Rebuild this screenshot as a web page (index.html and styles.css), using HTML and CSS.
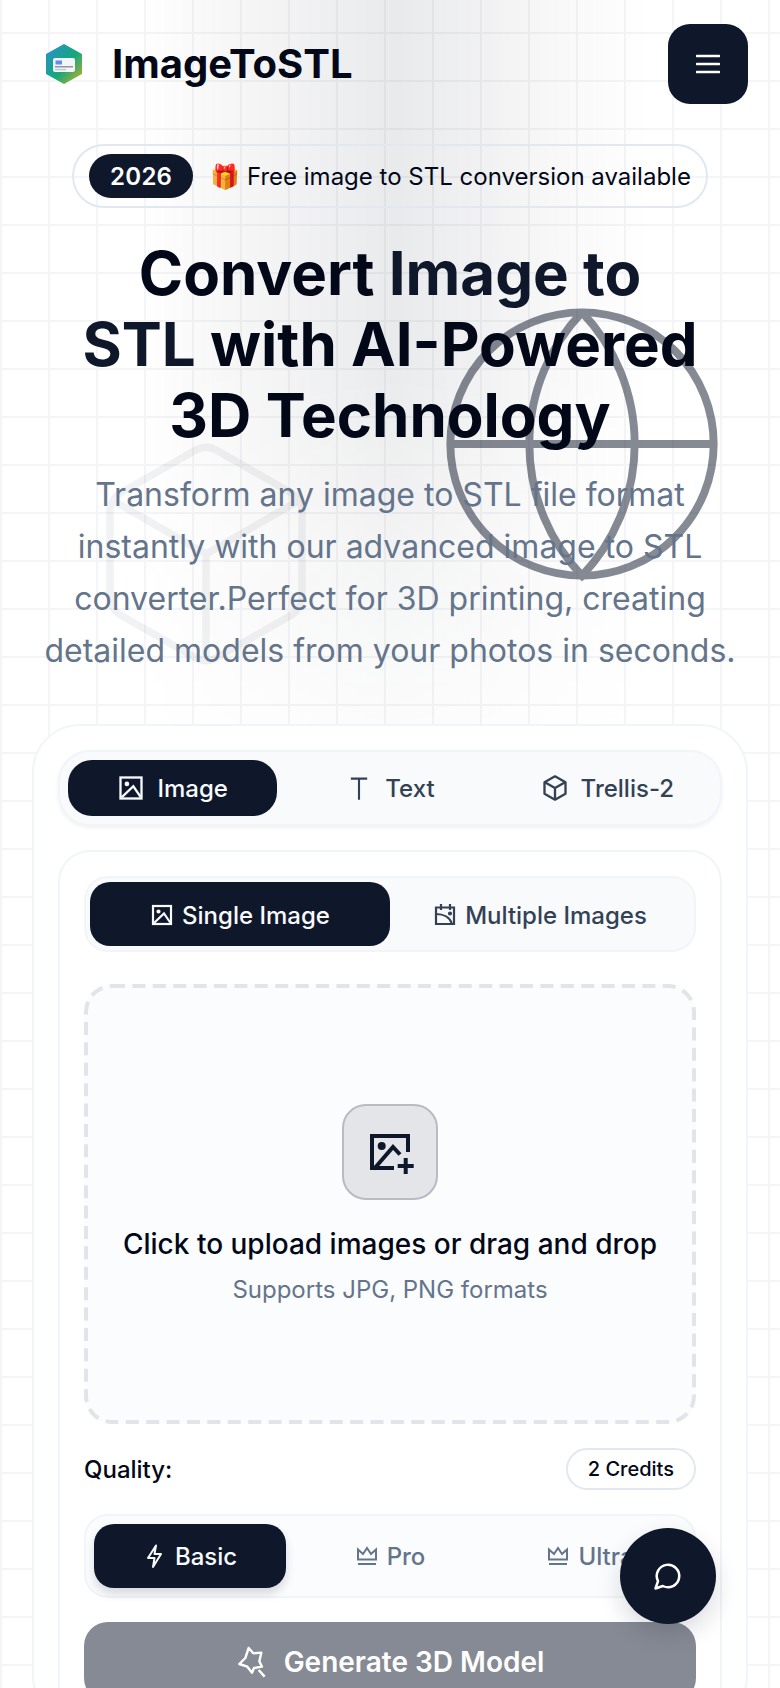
FILE: index.html
```html
<!DOCTYPE html>
<html lang="en">
<head>
<meta charset="utf-8">
<title>ImageToSTL</title>
<link rel="stylesheet" href="styles.css">
</head>
<body>
<div class="glow"></div>
<svg class="bg-cube" viewBox="0 0 24 24" fill="none" stroke="currentColor" stroke-width=".7"><path d="M21 8a2 2 0 0 0-1-1.73l-7-4a2 2 0 0 0-2 0l-7 4A2 2 0 0 0 3 8v8a2 2 0 0 0 1 1.73l7 4a2 2 0 0 0 2 0l7-4A2 2 0 0 0 21 16Z"/><path d="m3.3 7 8.7 5 8.7-5"/><path d="M12 22V12"/></svg>
<svg class="bg-globe" viewBox="0 0 24 24" fill="none" stroke="currentColor" stroke-width=".6"><circle cx="12" cy="12" r="10"/><path d="M12 2a14.5 14.5 0 0 0 0 20 14.5 14.5 0 0 0 0-20"/><path d="M2 12h20"/></svg>

<header class="header">
  <div class="brand">
    <svg class="logo" viewBox="0 0 64 64"><defs><linearGradient id="lg" x1="0" y1="0" x2="1" y2="1"><stop offset="0" stop-color="#2a8fd0"/><stop offset=".55" stop-color="#14a87c"/><stop offset="1" stop-color="#c2b026"/></linearGradient></defs><path d="M32 13 49 22.500V41.500L32 51 15 41.500V22.500Z" fill="url(#lg)" stroke="url(#lg)" stroke-width="2" stroke-linejoin="round"/><rect x="21" y="26" width="22" height="14" rx="2" fill="#f3f5f7"/><rect x="23.500" y="28.500" width="6.500" height="4" fill="#5b8ff0"/><rect x="23" y="34" width="18" height="1.500" fill="#8f98a3"/><rect x="23" y="36.800" width="11" height="1.500" fill="#c5cad0"/></svg>
    <span class="brand-name">ImageToSTL</span>
  </div>
  <button class="menu-btn" aria-label="Menu"><svg viewBox="0 0 24 24" fill="none" stroke="#fff" stroke-width="2.600" stroke-linecap="round"><path d="M1 4h22M1 12h22M1 20h22"/></svg></button>
</header>

<main class="hero">
  <div class="announce"><span class="year">2026</span><span class="announce-text"><span class="gift">🎁</span> Free image to STL conversion available</span></div>
  <h1 class="title"><span class="dark">Convert</span> <span class="navy">Image to</span><br><span class="navy">STL</span> <span class="dark">with AI-Powered</span><br><span class="dark">3D Technology</span></h1>
  <p class="lead">Transform any image to STL file format instantly with our advanced image to STL converter.Perfect for 3D printing, creating detailed models from your photos in seconds.</p>
</main>

<section class="card">
  <div class="mode-tabs">
    <button class="mode-tab active"><svg class="ico" viewBox="0 0 24 24" fill="none" stroke="currentColor" stroke-width="2"><rect x="3" y="3" width="18" height="18"/><circle cx="8.500" cy="8.500" r="1" fill="currentColor"/><path d="M4 20 14 10.500 20.500 20"/></svg>Image</button>
    <button class="mode-tab"><svg class="ico" viewBox="0 0 24 24" fill="none" stroke="currentColor" stroke-width="1.800"><path d="M5 4h14M12 4v18"/></svg>Text</button>
    <button class="mode-tab"><svg class="ico" viewBox="0 0 24 24" fill="none" stroke="currentColor" stroke-width="2" stroke-linejoin="round"><path d="M12 2 21 7v10l-9 5-9-5V7Z"/><path d="m3.300 7 8.700 5 8.700-5M12 22V12"/></svg>Trellis-2</button>
  </div>
  <div class="panel">
    <div class="sub-tabs">
      <button class="sub-tab active"><svg class="ico-sm" viewBox="0 0 24 24" fill="none" stroke="currentColor" stroke-width="2.200"><rect x="3" y="3" width="18" height="18"/><circle cx="8.500" cy="8.500" r="1" fill="currentColor"/><path d="M4 20 14 10.500 20.500 20"/></svg>Single Image</button>
      <button class="sub-tab"><svg class="ico-sm" viewBox="0 0 24 24" fill="none" stroke="currentColor" stroke-width="2.200"><path d="M8 1v6M17 1v6M3 4.500h18V21H3Z"/><path d="M3 11c7 0 14 3 16 10"/><circle cx="17" cy="10.500" r="1" fill="currentColor"/></svg>Multiple Images</button>
    </div>
    <div class="dropzone">
      <svg class="dash" viewBox="0 0 612 440" fill="none"><rect x="2" y="2" width="608" height="436" rx="26" stroke="#e2e4e9" stroke-width="4" stroke-dasharray="13 7.400"/></svg>
      <div class="upload-icon"><svg viewBox="0 0 48 48" fill="none" stroke="#0f172a" stroke-width="4"><path d="M28 40H6V8H42V24"/><circle cx="15.700" cy="18" r="4" fill="#0f172a" stroke="none"/><path d="M8 41 27 19l7 7.500"/><path d="M39.700 30v16M31.700 38h16"/></svg></div>
      <p class="drop-title">Click to upload images or drag and drop</p>
      <p class="drop-sub">Supports JPG, PNG formats</p>
    </div>
    <div class="quality-row"><span class="quality-label">Quality:</span><span class="credits">2 Credits</span></div>
    <div class="quality-tabs">
      <button class="q-tab active"><svg class="ico-sm" viewBox="0 0 24 24" fill="none" stroke="currentColor" stroke-width="2" stroke-linejoin="round"><path d="M13 1.500 5 14h6.500L10 23l8-13h-6.500Z"/></svg>Basic</button>
      <button class="q-tab"><svg class="ico-sm" viewBox="0 0 24 24" fill="none" stroke="currentColor" stroke-width="2"><path d="M3 5.500v10h18v-10l-5 4.500-4-6-4 6Z"/><path d="M3 20h18"/></svg>Pro</button>
      <button class="q-tab"><svg class="ico-sm" viewBox="0 0 24 24" fill="none" stroke="currentColor" stroke-width="2"><path d="M3 5.500v10h18v-10l-5 4.500-4-6-4 6Z"/><path d="M3 20h18"/></svg>Ultra</button>
    </div>
    <button class="generate"><svg class="ico-lg" viewBox="0 0 24 24" fill="none" stroke="currentColor" stroke-width="1.800" stroke-linejoin="round"><path d="M9.500 1.500 13 5.500l6-.5-1.500 6.500 2 4-6 1-1.500 3.500-3.500-4.500-6-2 4.500-4.500Z"/><path d="m17 18 4.500 5"/></svg>Generate 3D Model</button>
  </div>
</section>

<button class="chat" aria-label="Chat"><svg viewBox="0 0 24 24" fill="none" stroke="#fff" stroke-width="2" stroke-linejoin="round"><path d="M7.900 20A9 9 0 1 0 4 16.100L2 22Z"/></svg></button>
</body>
</html>
```
FILE: styles.css
```css
* { box-sizing: border-box; }
html, body { margin: 0; height: 1688px; overflow: hidden; }
body {
  position: relative;
  font-family: Inter, "Noto Sans", sans-serif;
  color: #020817;
  background-color: #fff;
  background-image:
    linear-gradient(#f4f5f6 2px, transparent 2px),
    linear-gradient(90deg, #f4f5f6 2px, transparent 2px);
  background-size: 48px 48px;
  background-position: 0 32px, 0 0;
}
button { font: inherit; border: 0; background: none; cursor: pointer; padding: 0; }
p, h1 { margin: 0; }

.glow {
  position: absolute; left: 140px; top: 0; width: 510px; height: 790px;
  background: linear-gradient(90deg, rgba(15,23,42,0), rgba(15,23,42,.03) 15%, rgba(15,23,42,.06) 32%, rgba(15,23,42,.09) 50%, rgba(15,23,42,.06) 68%, rgba(15,23,42,.025) 85%, rgba(15,23,42,0));
  -webkit-mask-image: linear-gradient(#000 45%, transparent);
  mask-image: linear-gradient(#000 45%, transparent);
}
.bg-cube { position: absolute; left: 78px; top: 426px; width: 256px; height: 256px; color: #0f172a; opacity: .05; }
.bg-globe { position: absolute; left: 424px; top: 286px; width: 316px; height: 316px; color: #0f172a; opacity: .5; }

.header { position: relative; display: flex; justify-content: space-between; align-items: center; padding: 24px 32px 0; }
.brand { display: flex; align-items: center; gap: 16px; }
.logo { width: 64px; height: 64px; }
.brand-name { font-size: 40px; font-weight: 700; line-height: 44px; }
.menu-btn { width: 80px; height: 80px; border-radius: 22px; background: #0f172a; display: flex; align-items: center; justify-content: center; }
.menu-btn svg { width: 24px; height: 24px; }

.hero { position: relative; display: flex; flex-direction: column; align-items: center; padding: 40px 32px 0; }
.announce { display: flex; align-items: center; gap: 17px; height: 64px; padding: 0 15px; border: 2px solid #e2e8f0; border-radius: 32px; }
.year { display: flex; align-items: center; height: 44px; padding: 0 21px; border-radius: 22px; background: #0f172a; color: #fff; font-size: 24px; font-weight: 600; letter-spacing: .25px; }
.announce-text { font-size: 24px; white-space: nowrap; }
.title { margin-top: 30px; font-size: 60px; line-height: 71px; font-weight: 700; text-align: center; white-space: nowrap; }
.navy { color: #0f172a; }
.dark { color: #020817; }
.lead { margin-top: 18px; width: 716px; font-size: 32px; line-height: 52px; color: #64748b; text-align: center; }

.card { position: relative; margin: 47px 32px 0; padding: 24px; height: 1000px; background: #fff; border: 2px solid #f1f5f9; border-radius: 48px; }
.mode-tabs { display: grid; grid-template-columns: repeat(3, 1fr); gap: 8px; padding: 8px; border: 2px solid #f1f5f9; border-radius: 32px; background: #f8fafc; box-shadow: 0 2px 4px rgba(15,23,42,.06); }
.mode-tab { display: flex; align-items: center; justify-content: center; gap: 12px; height: 56px; border-radius: 24px; font-size: 24px; font-weight: 500; color: #334155; }
.mode-tab.active, .sub-tab.active, .q-tab.active { background: #0f172a; color: #f8fafc; }
.ico { width: 28px; height: 28px; }
.ico-sm { width: 24px; height: 24px; }
.ico-lg { width: 32px; height: 32px; }
.panel { margin-top: 24px; padding: 24px; border: 2px solid #f1f5f9; border-radius: 32px; }
.sub-tabs { display: grid; grid-template-columns: 1fr 1fr; padding: 4px; border: 2px solid #f1f5f9; border-radius: 24px; background: #f8fafc; }
.sub-tab { display: flex; align-items: center; justify-content: center; gap: 8px; height: 64px; padding-top: 2px; border-radius: 20px; font-size: 24px; font-weight: 500; color: #334155; }
.dropzone { position: relative; display: flex; flex-direction: column; align-items: center; justify-content: center; margin-top: 32px; height: 440px; padding-top: 2px; border-radius: 28px; background: #fbfcfe; }
.dash { position: absolute; inset: 0; width: 100%; height: 100%; }
.upload-icon { display: flex; align-items: center; justify-content: center; width: 96px; height: 96px; border: 2px solid #b8bbc2; border-radius: 24px; background: #e4e5e9; }
.upload-icon svg { width: 48px; height: 48px; }
.drop-title { margin-top: 24px; font-size: 28px; line-height: 40px; font-weight: 500; }
.drop-sub { margin-top: 10px; font-size: 24px; line-height: 32px; color: #64748b; }
.quality-row { display: flex; align-items: center; justify-content: space-between; margin-top: 24px; }
.quality-label { font-size: 24px; font-weight: 500; }
.credits { display: flex; align-items: center; height: 42px; padding: 0 20px; border: 2px solid #e2e8f0; border-radius: 21px; background: #fff; font-size: 20px; font-weight: 500; }
.quality-tabs { display: grid; grid-template-columns: repeat(3, 1fr); gap: 8px; margin-top: 24px; padding: 8px; border: 2px solid #f1f5f9; border-radius: 24px; background: #fbfcfe; }
.q-tab { display: flex; align-items: center; justify-content: center; gap: 8px; height: 64px; border-radius: 20px; font-size: 24px; font-weight: 500; color: #64748b; }
.q-tab.active { box-shadow: 0 6px 10px rgba(15,23,42,.15); }
.generate { display: flex; align-items: center; justify-content: center; gap: 16px; width: 100%; height: 80px; margin-top: 24px; border-radius: 24px; background: #868a94; color: #fff; font-size: 28px; font-weight: 600; }
.chat { position: fixed; right: 64px; bottom: 64px; display: flex; align-items: center; justify-content: center; width: 96px; height: 96px; border-radius: 50%; background: #0f172a; box-shadow: 0 10px 24px rgba(15,23,42,.15); }
.chat svg { width: 30px; height: 30px; }
```
